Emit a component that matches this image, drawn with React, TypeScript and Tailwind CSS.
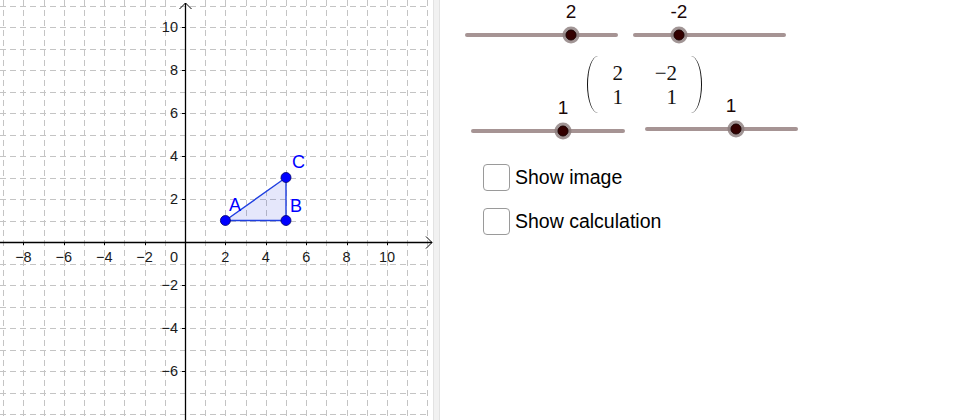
import React from "react";

const ox = 185;
const oy = 242;
const sx = 20.2;
const sy = 21.5;

const px = (v: number) => ox + v * sx;
const py = (v: number) => oy - v * sy;

const fmt = (n: number) => (n < 0 ? `\u2212${-n}` : `${n}`);

function Graph() {
  const vLines: number[] = [];
  for (let k = -9; k <= 12; k++) if (k !== 0) vLines.push(k);
  const hLines: number[] = [];
  for (let k = -8; k <= 11; k++) if (k !== 0) hLines.push(k);

  const xLabels = [-8, -6, -4, -2, 2, 4, 6, 8, 10];
  const yLabels = [10, 8, 6, 4, 2, -2, -4, -6];

  const A = { x: px(2), y: py(1) };
  const B = { x: px(5), y: py(1) };
  const C = { x: px(5), y: py(3) };

  return (
    <svg width={433} height={420} className="block shrink-0">
      {/* grid */}
      {vLines.map((k) => (
        <line
          key={`v${k}`}
          x1={Math.round(px(k)) + 0.5}
          y1={0}
          x2={Math.round(px(k)) + 0.5}
          y2={420}
          stroke="#c4c4c4"
          strokeWidth={1}
          strokeDasharray="6 4"
        />
      ))}
      {hLines.map((k) => (
        <line
          key={`h${k}`}
          x1={0}
          y1={Math.round(py(k)) + 0.5}
          x2={430}
          y2={Math.round(py(k)) + 0.5}
          stroke="#c4c4c4"
          strokeWidth={1}
          strokeDasharray="6 4"
        />
      ))}

      {/* axes */}
      <line x1={0} y1={oy + 0.5} x2={432} y2={oy + 0.5} stroke="#000" strokeWidth={1.3} />
      <polyline points={`426,${oy - 5.5} 432,${oy + 0.5} 426,${oy + 6.5}`} fill="none" stroke="#000" strokeWidth={1} />
      <line x1={ox + 0.5} y1={3} x2={ox + 0.5} y2={420} stroke="#000" strokeWidth={1.3} />
      <polyline points={`${ox - 5.5},9 ${ox + 0.5},3 ${ox + 6.5},9`} fill="none" stroke="#000" strokeWidth={1} />

      {/* ticks */}
      {xLabels.map((k) => (
        <line key={`tx${k}`} x1={Math.round(px(k)) + 0.5} y1={oy} x2={Math.round(px(k)) + 0.5} y2={oy + 3} stroke="#000" strokeWidth={1} />
      ))}
      {yLabels.map((k) => (
        <line key={`ty${k}`} x1={ox - 3} y1={Math.round(py(k)) + 0.5} x2={ox} y2={Math.round(py(k)) + 0.5} stroke="#000" strokeWidth={1} />
      ))}

      {/* labels */}
      <g fontFamily="'Liberation Sans', Arial, sans-serif" fontSize={14.5} fill="#1a1a1a">
        {xLabels.map((k) => (
          <text key={`lx${k}`} x={px(k)} y={oy + 20} textAnchor="middle">
            {fmt(k)}
          </text>
        ))}
        <text x={174} y={oy + 20} textAnchor="middle">
          0
        </text>
        {yLabels.map((k) => (
          <text key={`ly${k}`} x={178} y={py(k) + 5} textAnchor="end">
            {fmt(k)}
          </text>
        ))}
      </g>

      {/* triangle */}
      <polygon
        points={`${A.x},${A.y} ${B.x},${B.y} ${C.x},${C.y}`}
        fill="rgba(40,60,220,0.12)"
        stroke="#1f3fe0"
        strokeWidth={1.4}
      />
      {[A, B, C].map((p, i) => (
        <circle key={i} cx={p.x} cy={p.y} r={5} fill="#0000ff" stroke="#00006a" strokeWidth={0.8} />
      ))}
      <g fontFamily="'Liberation Sans', Arial, sans-serif" fontSize={18} fill="#0000ff">
        <text x={229} y={211}>A</text>
        <text x={290} y={212}>B</text>
        <text x={292} y={168}>C</text>
      </g>
    </svg>
  );
}

interface SliderProps {
  label: string;
  width: number;
  thumb: number;
  labelAt?: number;
  className?: string;
}

function Slider({ label, width, thumb, labelAt, className }: SliderProps) {
  return (
    <div className={`shrink-0 ${className ?? ""}`} style={{ width }}>
      <div className="relative h-[24px]">
        <span
          className="absolute top-0 -translate-x-1/2 text-[19px] leading-[24px] text-[#1c0808] font-['Liberation_Sans',Arial,sans-serif]"
          style={{ left: labelAt ?? thumb }}
        >
          {label}
        </span>
      </div>
      <div className="relative mt-[9px] h-[4px] rounded-full bg-[#a69494]">
        <div
          className="absolute top-1/2 flex h-[17px] w-[17px] -translate-x-1/2 -translate-y-1/2 items-center justify-center rounded-full bg-[#8a7a7a]/80"
          style={{ left: thumb }}
        >
          <div className="h-[11px] w-[11px] rounded-full bg-[#330000] border border-[#1a0000]" />
        </div>
      </div>
    </div>
  );
}

function Matrix() {
  const cell = "text-right leading-[24px]";
  return (
    <div className="ml-[147px] mt-[19px] flex h-[57px] items-center font-['Liberation_Serif','DejaVu_Serif',serif] text-[21px] text-[#111]">
      <div className="mr-[-11px] h-[57px] w-[22px] rounded-[50%] border-l-[1.5px] border-[#111]" />
      <div className="grid grid-cols-[25px_54px]">
        <span className={cell}>2</span>
        <span className={cell}>{"\u22122"}</span>
        <span className={cell}>1</span>
        <span className={cell}>1</span>
      </div>
      <div className="ml-[3px] h-[57px] w-[22px] rounded-[50%] border-r-[1.5px] border-[#111]" />
    </div>
  );
}

function Check({ label }: { label: string }) {
  return (
    <label className="flex items-center gap-[5px]">
      <span className="h-[27px] w-[27px] rounded-[4px] border border-[#9a9a9a] bg-white" />
      <span className="text-[19.5px] leading-[27px] text-black font-['Liberation_Sans',Arial,sans-serif]">
        {label}
      </span>
    </label>
  );
}

export default function App() {
  return (
    <div className="flex h-[420px] w-[980px] overflow-hidden bg-white">
      <Graph />
      <div className="h-full w-[7px] shrink-0 border-x border-[#e2e2e2] bg-[#f1f1f1]" />
      <div className="flex flex-1 flex-col">
        <div className="ml-[25px] flex gap-[15px]">
          <Slider label="2" width={153} thumb={106} />
          <Slider label="-2" width={153} thumb={46} />
        </div>
        <Matrix />
        <div className="ml-[31px] mt-[-19px] flex items-start gap-[20px]">
          <Slider label="1" width={154} thumb={92} className="mt-[2px]" />
          <Slider label="1" width={153} thumb={91} labelAt={86} />
        </div>
        <div className="ml-[43px] mt-[31px] flex flex-col gap-[17px]">
          <Check label="Show image" />
          <Check label="Show calculation" />
        </div>
      </div>
    </div>
  );
}
